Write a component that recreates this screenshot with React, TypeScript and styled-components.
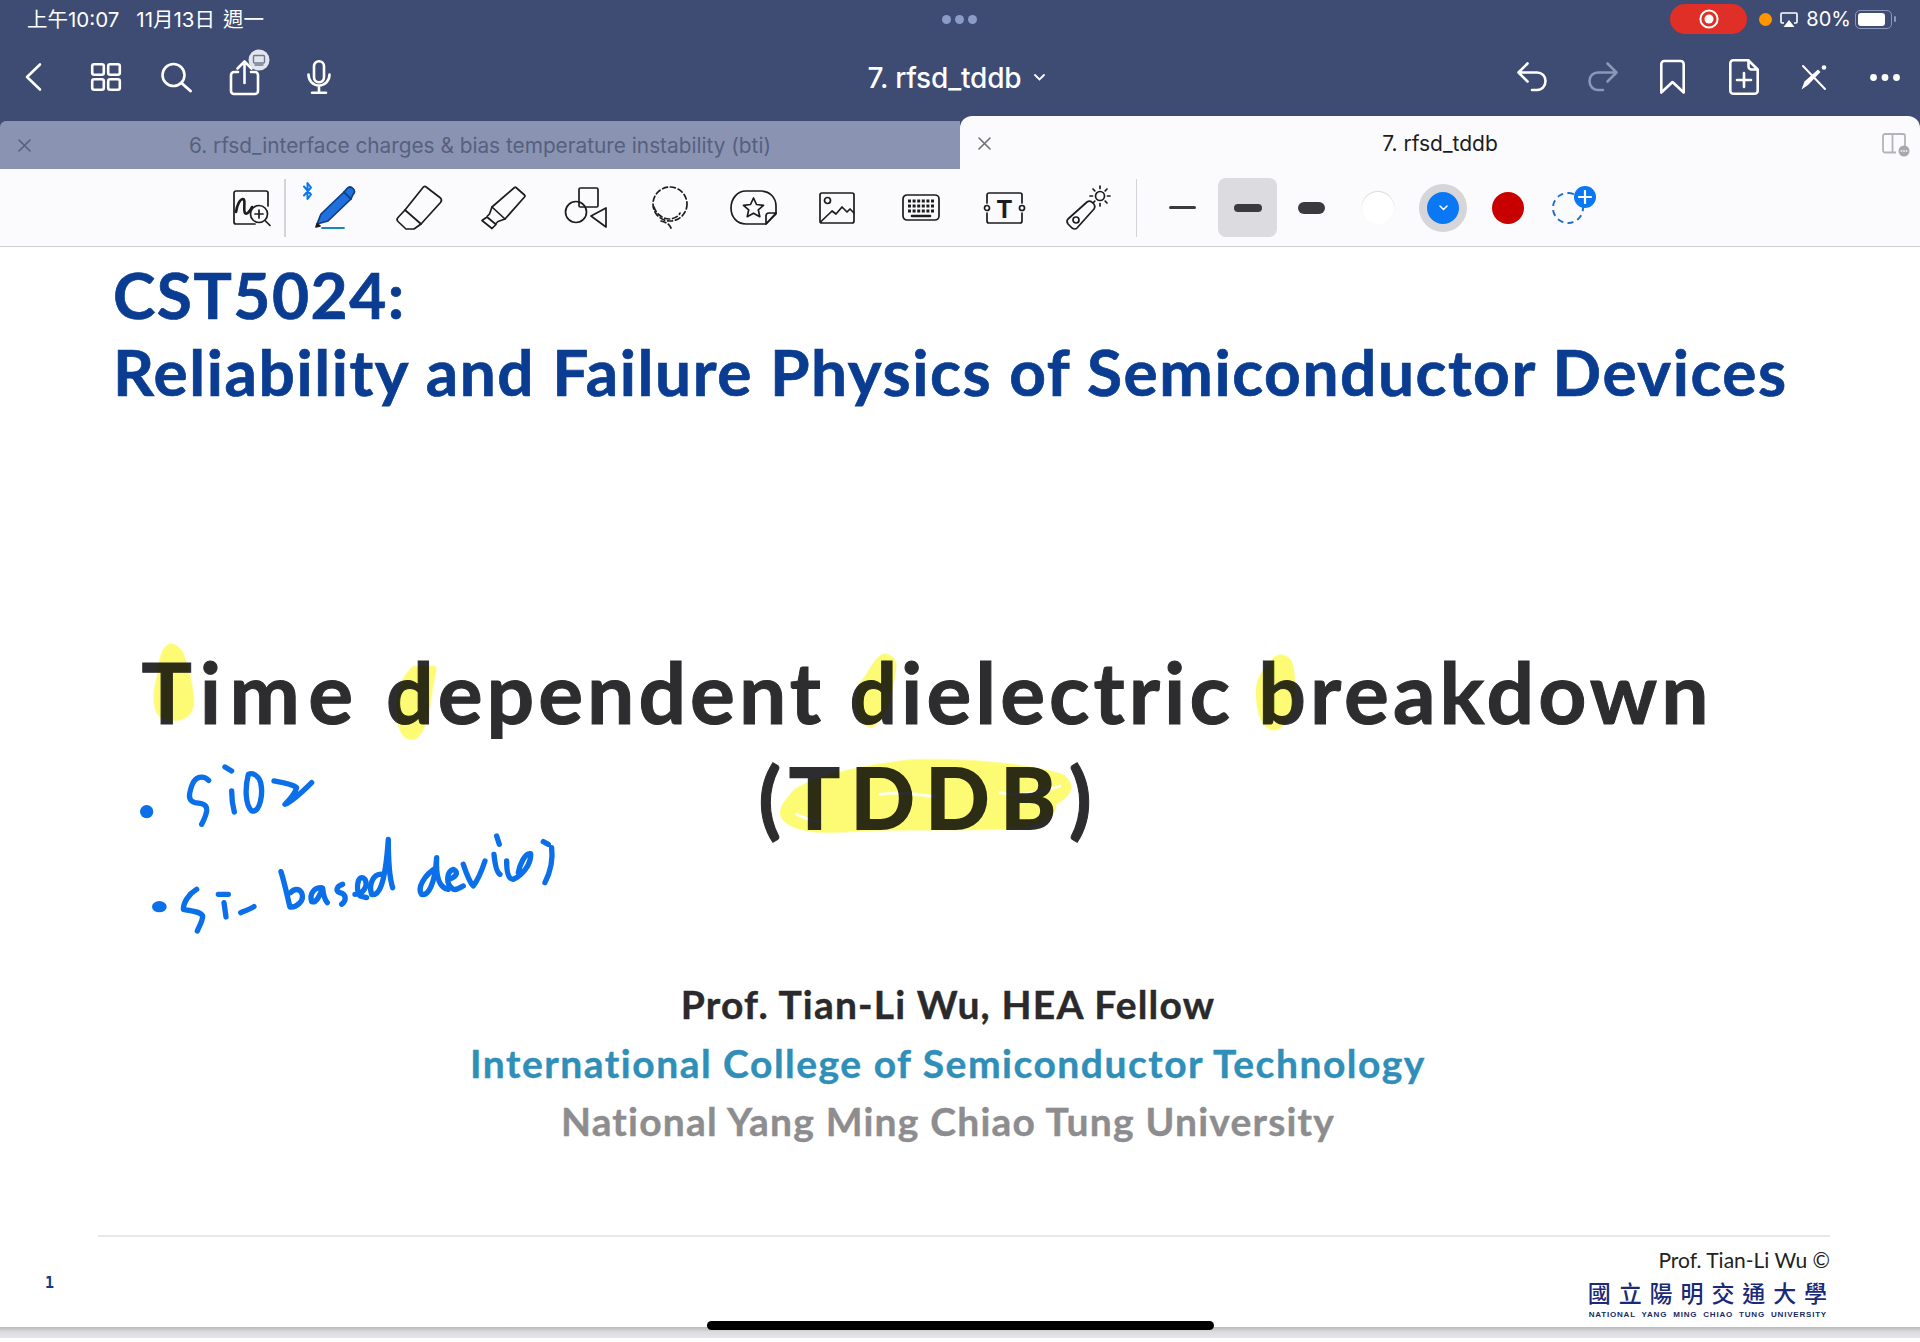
import React from 'react';
import styled, { createGlobalStyle } from 'styled-components';

const GlobalStyle = createGlobalStyle`
  html, body {
    margin: 0;
    padding: 0;
    background: #ffffff;
    overflow: hidden;
  }
`;

const Page = styled.div`
  position: relative;
  width: 1920px;
  height: 1342px;
  overflow: hidden;
  font-family: Inter, 'Noto Sans CJK TC', sans-serif;
`;

const Header = styled.header`
  background: #3e4c74;
  color: #ffffff;
`;

const StatusBar = styled.div`
  display: grid;
  grid-template-columns: 1fr auto 1fr;
  align-items: center;
  box-sizing: border-box;
  height: 38px;
  padding: 0 28px 0 27px;
  font-size: 20.5px;
`;

const StatusLeft = styled.div`
  display: flex;
  gap: 8px;
  margin-top: -3px;
  white-space: nowrap;
`;

const StatusTime = styled.span`
  margin-right: 9px;
`;

const Grabber = styled.div`
  display: flex;
  gap: 4px;
`;

const GrabberDot = styled.span`
  width: 9px;
  height: 9px;
  border-radius: 50%;
  background: #8b9bc8;
`;

const StatusRight = styled.div`
  display: flex;
  align-items: center;
  justify-content: flex-end;
`;

const RecordPill = styled.div`
  display: flex;
  align-items: center;
  justify-content: center;
  width: 77px;
  height: 30px;
  border-radius: 15px;
  background: #df2f26;
`;

const OrangeDot = styled.span`
  width: 13px;
  height: 13px;
  margin-left: 12px;
  border-radius: 50%;
  background: #ff9500;
`;

const AirplayIcon = styled.svg`
  margin-left: 8px;
`;

const BatteryText = styled.span`
  margin: 0 4px 0 8px;
  font-size: 20px;
`;

const Battery = styled.div`
  box-sizing: border-box;
  position: relative;
  width: 37px;
  height: 19px;
  padding: 2px;
  border: 1.5px solid #8b97b8;
  border-radius: 5px;

  &::before {
    content: '';
    display: block;
    width: 27px;
    height: 100%;
    border-radius: 3px;
    background: #ffffff;
  }

  &::after {
    content: '';
    position: absolute;
    right: -5px;
    top: 5px;
    width: 2px;
    height: 6px;
    border-radius: 1px;
    background: #8b97b8;
  }
`;

const NavBar = styled.nav`
  display: grid;
  grid-template-columns: 1fr auto 1fr;
  align-items: center;
  height: 78px;
`;

const NavGroup = styled.div<{ $right?: boolean }>`
  display: flex;
  align-items: center;
  justify-content: ${(p) => (p.$right ? 'flex-end' : 'flex-start')};
  padding: ${(p) => (p.$right ? '0 20px 0 0' : '0 0 0 25px')};
`;

const NavIcon = styled.svg<{ $gap?: number; $dim?: boolean }>`
  display: block;
  flex: none;
  margin-left: ${(p) => p.$gap ?? 0}px;
  fill: none;
  stroke: ${(p) => (p.$dim ? '#8b97b8' : '#ffffff')};
  stroke-width: 2.6;
  stroke-linecap: round;
  stroke-linejoin: round;
  overflow: visible;
`;

const DocTitle = styled.div`
  display: flex;
  align-items: center;
  gap: 13px;
  padding: 1px 7px 0 0;
  font-size: 28px;
  font-weight: 500;
  letter-spacing: -0.2px;
  white-space: nowrap;
`;

const TabStrip = styled.div`
  display: flex;
  align-items: flex-end;
  height: 53px;
`;

const Tab = styled.div<{ $active?: boolean }>`
  display: grid;
  grid-template-columns: 48px 1fr 48px;
  align-items: center;
  justify-items: center;
  box-sizing: border-box;
  width: 960px;
  height: ${(p) => (p.$active ? 53 : 48)}px;
  padding-top: ${(p) => (p.$active ? 2 : 0)}px;
  border-radius: ${(p) => (p.$active ? '12px 12px 0 0' : '6px 0 0 0')};
  background: ${(p) => (p.$active ? '#fbfafc' : '#8a94b2')};
  color: ${(p) => (p.$active ? '#1c1c1e' : '#56607f')};
  font-size: ${(p) => (p.$active ? 21 : 20.8)}px;
  white-space: nowrap;
`;

const CloseIcon = styled.svg<{ $active?: boolean }>`
  stroke: ${(p) => (p.$active ? '#6e6e73' : '#56607f')};
  stroke-width: 1.6;
  stroke-linecap: round;
`;

const PanelIcon = styled.svg`
  fill: none;
  stroke: #b4b4b8;
  stroke-width: 1.8;
  margin-left: -4px;
  overflow: visible;
`;

const Toolbar = styled.div`
  display: flex;
  align-items: center;
  box-sizing: border-box;
  height: 78px;
  padding-left: 233px;
  border-bottom: 1.5px solid #cfcfd2;
  background: #fbfafc;
`;

const ToolIcon = styled.svg<{ $gap?: number }>`
  display: block;
  flex: none;
  margin-left: ${(p) => p.$gap ?? 0}px;
  fill: none;
  stroke: #1c1c1e;
  stroke-width: 1.7;
  stroke-linecap: round;
  stroke-linejoin: round;
  overflow: visible;
`;

const BluetoothIcon = styled(ToolIcon)`
  align-self: flex-start;
  margin-top: 13px;
  stroke: #0a78e8;
  stroke-width: 2;
`;

const ToolDivider = styled.span<{ $gap: number }>`
  flex: none;
  width: 1.5px;
  height: 58px;
  margin-left: ${(p) => p.$gap}px;
  background: #d4d4d8;
`;

const LineWidth = styled.span<{ $gap: number; $h: number; $w?: number }>`
  flex: none;
  width: ${(p) => p.$w ?? 27}px;
  height: ${(p) => p.$h}px;
  margin-left: ${(p) => p.$gap}px;
  border-radius: ${(p) => p.$h / 2}px;
  background: #3b3b3f;
`;

const LineWidthBox = styled.div`
  display: flex;
  align-items: center;
  justify-content: center;
  flex: none;
  width: 59px;
  height: 59px;
  margin-left: 22px;
  border-radius: 8px;
  background: #dcdbe0;
`;

const Swatch = styled.span<{ $gap: number; $color: string; $ring?: boolean }>`
  display: flex;
  align-items: center;
  justify-content: center;
  flex: none;
  box-sizing: content-box;
  width: 32px;
  height: 32px;
  margin-left: ${(p) => p.$gap}px;
  border-radius: 50%;
  background: ${(p) => p.$color};
  border: ${(p) => (p.$ring ? '8px solid #d6d6da' : 'none')};
`;

const WhiteSwatch = styled(Swatch)`
  box-shadow: 0 -1px 1px #dadada;
`;

const AddColor = styled.div`
  position: relative;
  flex: none;
  box-sizing: border-box;
  width: 32px;
  height: 32px;
  margin-left: 28px;
  border: 2px dashed #1f6fc8;
  border-radius: 50%;
`;

const AddBubble = styled.span`
  position: absolute;
  right: -14px;
  top: -8px;
  display: flex;
  align-items: center;
  justify-content: center;
  width: 22px;
  height: 22px;
  border-radius: 50%;
  background: #0a78f5;
`;

const Slide = styled.main`
  position: relative;
  box-sizing: border-box;
  height: 1080px;
  background: #ffffff;
  font-family: Lato, sans-serif;
  font-weight: 700;
`;

const CourseBlock = styled.div`
  padding: 10px 0 0 113px;
  color: #0a3d91;
  font-size: 64px;
  line-height: 75px;
  white-space: nowrap;
  -webkit-text-stroke: 0.7px #0a3d91;
`;

const CourseLine = styled.div<{ $spacing: number }>`
  letter-spacing: ${(p) => p.$spacing}px;

  & + & {
    margin-top: 2px;
  }
`;

const Heading = styled.h1`
  width: 1854px;
  margin: 230px 0 0;
  color: #2d2c2e;
  font-size: 84px;
  font-weight: 700;
  line-height: 105px;
  letter-spacing: 4px;
  text-align: center;
  white-space: nowrap;
  -webkit-text-stroke: 1px #2d2c2e;
`;

const WideWord = styled.span`
  letter-spacing: 8.4px;
`;

const Acronym = styled.span`
  padding: 0 2px 0 4px;
  letter-spacing: 11px;
  -webkit-text-stroke: 2px #2d2c2e;
`;

const Credits = styled.div`
  width: 1896px;
  margin-top: 126px;
  font-size: 39px;
  line-height: 58.5px;
  text-align: center;
  white-space: nowrap;
  -webkit-text-stroke: 0.4px currentColor;
`;

const CreditLine = styled.div<{ $color: string; $spacing: number }>`
  color: ${(p) => p.$color};
  letter-spacing: ${(p) => p.$spacing}px;
`;

const Footer = styled.footer`
  position: absolute;
  left: 98px;
  right: 90px;
  bottom: 0;
  height: 90px;
  border-top: 2px solid #e9e9eb;
`;

const PageNumber = styled.span`
  position: absolute;
  left: -53px;
  top: 37px;
  color: #123a80;
  font-family: 'DejaVu Sans Mono', monospace;
  font-size: 15px;
  font-weight: 700;
`;

const FooterBrand = styled.div`
  display: flex;
  flex-direction: column;
  align-items: flex-end;
  padding-top: 11px;
`;

const Copyright = styled.div`
  color: #222222;
  font-size: 21px;
  font-weight: 400;
  line-height: 24px;
`;

const SchoolName = styled.div`
  margin: 6px -8px 0 0;
  padding-right: 3px;
  color: #1a2a78;
  font-family: 'Noto Sans CJK TC', sans-serif;
  font-size: 23px;
  font-weight: 500;
  line-height: 28px;
  letter-spacing: 7.9px;
`;

const SchoolNameEn = styled.div`
  margin-top: 4px;
  padding-right: 3px;
  color: #1a2a60;
  font-family: 'Liberation Sans', sans-serif;
  font-size: 8px;
  font-weight: 700;
  line-height: 10px;
  letter-spacing: 0.8px;
  word-spacing: 3px;
`;

const InkLayer = styled.svg`
  position: absolute;
  left: 0;
  top: 0;
  pointer-events: none;
`;

const Highlights = styled.g`
  mix-blend-mode: multiply;
  fill: #fdfb74;
`;

const InkStrokes = styled.g`
  fill: none;
  stroke: #0a6fe8;
  stroke-width: 16;
  stroke-linecap: round;
  stroke-linejoin: round;
`;

const ShadowStrip = styled.div`
  height: 11px;
  background: linear-gradient(#b9b9bc, #dcdbdf 45%, #e6e5e9);
`;

const HomeBar = styled.div`
  position: absolute;
  left: 707px;
  top: 1321px;
  width: 507px;
  height: 9px;
  border-radius: 5px;
  background: #000000;
`;

const Close = ({ active }: { active?: boolean }) => (
  <CloseIcon $active={active} width="13" height="13" viewBox="0 0 13 13">
    <path d="M1 1l11 11M12 1L1 12" />
  </CloseIcon>
);

const App = () => {
  return (
    <Page>
      <GlobalStyle />
      <Header>
        <StatusBar>
          <StatusLeft>
            <StatusTime>上午10:07</StatusTime>
            <span>11月13日</span>
            <span>週一</span>
          </StatusLeft>
          <Grabber>
            <GrabberDot />
            <GrabberDot />
            <GrabberDot />
          </Grabber>
          <StatusRight>
            <RecordPill>
              <svg width="20" height="20" viewBox="0 0 20 20">
                <circle cx="10" cy="10" r="8.6" fill="none" stroke="#fff" strokeWidth="2" />
                <circle cx="10" cy="10" r="4.5" fill="#fff" />
              </svg>
            </RecordPill>
            <OrangeDot />
            <AirplayIcon width="18" height="15" viewBox="0 0 18 15">
              <path d="M4 11H2a1 1 0 0 1-1-1V2a1 1 0 0 1 1-1h14a1 1 0 0 1 1 1v8a1 1 0 0 1-1 1h-2" fill="none" stroke="#fff" strokeWidth="1.6" />
              <path d="M9 8l5.5 7h-11z" fill="#fff" />
            </AirplayIcon>
            <BatteryText>80%</BatteryText>
            <Battery />
          </StatusRight>
        </StatusBar>

        <NavBar>
          <NavGroup>
            <NavIcon width="17" height="28" viewBox="0 0 17 28">
              <path d="M15 1.5L2 14l13 12.5" />
            </NavIcon>
            <NavIcon $gap={49} width="30" height="28" viewBox="0 0 30 28">
              <rect x="1.2" y="1.2" width="11.6" height="10.6" rx="2" />
              <rect x="17.2" y="1.2" width="11.6" height="10.6" rx="2" />
              <rect x="1.2" y="16.2" width="11.6" height="10.6" rx="2" />
              <rect x="17.2" y="16.2" width="11.6" height="10.6" rx="2" />
            </NavIcon>
            <NavIcon $gap={40} width="31" height="29" viewBox="0 0 31 29">
              <circle cx="12.5" cy="12" r="11" />
              <path d="M20.5 20l9 8" strokeWidth="3" />
            </NavIcon>
            <NavIcon $gap={38} width="30" height="36" viewBox="0 0 30 36">
              <path d="M8 13H4a3 3 0 0 0-3 3v16a3 3 0 0 0 3 3h21a3 3 0 0 0 3-3V16a3 3 0 0 0-3-3h-4" />
              <path d="M14.5 24V3M7.5 9.5l7-7 7 7" />
              <circle cx="29" cy="1" r="10.5" fill="#e3e5ec" stroke="none" />
              <rect x="23.5" y="-3.5" width="11" height="7.5" rx="1" fill="none" stroke="#6d7892" strokeWidth="1.4" />
              <path d="M25 6h8" stroke="#6d7892" strokeWidth="1.4" />
            </NavIcon>
            <NavIcon $gap={47} width="24" height="34" viewBox="0 0 24 34">
              <rect x="7" y="1.2" width="10" height="21" rx="5" />
              <path d="M1.5 14.5c0 6.500 4.500 11 10.500 11s10.500-4.500 10.500-11M12 25.500v6M5 32.800h14" />
            </NavIcon>
          </NavGroup>

          <DocTitle>
            7. rfsd_tddb
            <svg width="11" height="7" viewBox="0 0 11 7" fill="none" stroke="#fff" strokeWidth="1.8" strokeLinecap="round">
              <path d="M1 1l4.500 4.500L10 1" />
            </svg>
          </DocTitle>

          <NavGroup $right>
            <NavIcon width="30" height="30" viewBox="0 0 30 30">
              <path d="M10.500 1.500L1.500 10.500l9 9M1.500 10.500H20c5 0 8.500 3.500 8.500 8.500s-3.500 9-8.500 9h-5" />
            </NavIcon>
            <NavIcon $dim $gap={40} width="31" height="30" viewBox="0 0 31 30">
              <path d="M20.500 1.500l9 9-9 9M29.500 10.500H11c-5 0-8.500 3.500-8.500 8.500s3.500 9 8.500 9h5" />
            </NavIcon>
            <NavIcon $gap={42} width="25" height="34" viewBox="0 0 25 34">
              <path d="M1.300 4a3 3 0 0 1 3-3h16.400a3 3 0 0 1 3 3v28.500L12.500 22 1.300 32.500z" />
            </NavIcon>
            <NavIcon $gap={44} width="30" height="36" viewBox="0 0 30 36">
              <path d="M19.500 1.300H4.300a3 3 0 0 0-3 3v27.400a3 3 0 0 0 3 3h21.400a3 3 0 0 0 3-3V10.500zM19.500 1.300v6.200a3 3 0 0 0 3 3h6.200" />
              <path d="M15 14v14M8 21h14" />
            </NavIcon>
            <NavIcon $gap={41} width="27" height="25" viewBox="0 0 27 25">
              <path d="M3 1l22 23" strokeWidth="2" />
              <path d="M1.500 24.500l3-8L18 4.500 20.500 7 8 20z" fill="#fff" stroke="none" />
              <circle cx="24" cy="2.500" r="2.300" fill="#fff" stroke="none" />
            </NavIcon>
            <NavIcon $gap={43} width="30" height="7" viewBox="0 0 30 7">
              <circle cx="3.500" cy="3.500" r="3.400" fill="#fff" stroke="none" />
              <circle cx="15" cy="3.500" r="3.400" fill="#fff" stroke="none" />
              <circle cx="26.500" cy="3.500" r="3.400" fill="#fff" stroke="none" />
            </NavIcon>
          </NavGroup>
        </NavBar>

        <TabStrip>
          <Tab>
            <Close />
            <span>6. rfsd_interface charges &amp; bias temperature instability (bti)</span>
            <span />
          </Tab>
          <Tab $active>
            <Close active />
            <span>7. rfsd_tddb</span>
            <PanelIcon width="25" height="22" viewBox="0 0 25 22">
              <path d="M14 19.500H3a2 2 0 0 1-2-2V3a2 2 0 0 1 2-2h18a2 2 0 0 1 2 2v11M10.500 1v18.500" />
              <circle cx="22" cy="18" r="5.500" fill="#a9a9ad" stroke="none" />
              <circle cx="19.500" cy="18" r="0.900" fill="#eee" stroke="none" />
              <circle cx="22" cy="18" r="0.900" fill="#eee" stroke="none" />
              <circle cx="24.500" cy="18" r="0.900" fill="#eee" stroke="none" />
            </PanelIcon>
          </Tab>
        </TabStrip>
      </Header>

      <Toolbar>
        <ToolIcon width="38" height="36" viewBox="0 0 38 36">
          <path d="M22 34H3a2 2 0 0 1-2-2V3a2 2 0 0 1 2-2h30a2 2 0 0 1 2 2v13" />
          <path d="M3 22c1-7 4-13 7-13 3 0 0 11 2 14 2 2 5-2 7-6" strokeWidth="2.600" />
          <circle cx="26" cy="24" r="8.500" />
          <path d="M22 24h8M26 20v8M32 30.500l5 5" />
        </ToolIcon>
        <ToolDivider $gap={13} />
        <BluetoothIcon $gap={17} width="9" height="18" viewBox="0 0 9 18">
          <path d="M1 4.500l7 8L4.500 17V1L8 5.500l-7 8" />
        </BluetoothIcon>
        <ToolIcon $gap={4} width="41" height="43" viewBox="0 0 41 43">
          <path d="M1 38l4-10L28 6l7 7-23 22z" fill="#1f6fdc" stroke="#123d80" />
          <path d="M28 6l3-3.500c2-2 4-2 6 0s2 4 0 6l-2 4.500z" fill="#1f6fdc" stroke="#123d80" />
          <path d="M1 38l-1 3 4-1z" fill="#1c1c1e" />
          <path d="M6 42h22" stroke="#1d86b8" strokeWidth="1.800" />
        </ToolIcon>
        <ToolIcon $gap={39} width="47" height="45" viewBox="0 0 47 45">
          <path d="M29.500 1.500L44.500 13q2 2 0 4.500L25 39 9 25 27 2.500q1-1.500 2.500-1z" />
          <path d="M9 25l-7 7.500q-2 2 0 4L10 44h8l7-5" />
        </ToolIcon>
        <ToolIcon $gap={38} width="45" height="43" viewBox="0 0 45 43">
          <path d="M35 1.500l8.500 7.500q1 1 0 2L24 33l-13-12L33.500 1.500q.7-.7 1.500 0z" />
          <path d="M11 21l-2.500 7L6 30.500M24 33l-7 2.500-2.500 2.500M6 31l9 7.500-4 4-10-8z" />
        </ToolIcon>
        <ToolIcon $gap={39} width="41" height="41" viewBox="0 0 41 41">
          <rect x="14" y="1" width="19" height="19" rx="1.500" />
          <circle cx="11" cy="25" r="10.500" />
          <path d="M26 29l15-8v19z" />
        </ToolIcon>
        <ToolIcon $gap={45} width="37" height="42" viewBox="0 0 37 42" strokeDasharray="5 3">
          <circle cx="19" cy="17" r="17" />
          <path d="M3 20c2 7 9 12 15 12 5 0 10-3 11-6M10 34c5 1 8 3 10 7" />
        </ToolIcon>
        <ToolIcon $gap={42} width="47" height="35" viewBox="0 0 47 35">
          <path d="M36 34H16C7 34 1 27 1 18S7 1 16 1h15c9 0 15 7 15 15v8z" />
          <path d="M46 23h-7a3 3 0 0 0-3 3v8zM23.500 8l3 6.500 7 .8-5.200 4.600 1.500 6.800-6.300-3.500-6.300 3.500 1.500-6.800-5.200-4.600 7-.8z" />
        </ToolIcon>
        <ToolIcon $gap={42} width="36" height="32" viewBox="0 0 36 32">
          <rect x="1" y="1" width="34" height="30" rx="2" />
          <circle cx="8.500" cy="8.500" r="3" />
          <path d="M1.500 30L13 19l4 3 6-7 5 5 3-3 4 4" />
        </ToolIcon>
        <ToolIcon $gap={47} width="38" height="27" viewBox="0 0 38 27">
          <rect x="1" y="1" width="36" height="25" rx="4" />
          <path d="M6 7h26M6 12h26" strokeWidth="3" strokeDasharray="3 1.600" strokeLinecap="butt" />
          <path d="M6 17h26" strokeWidth="3" strokeDasharray="3 1.600" strokeLinecap="butt" />
          <path d="M10 22h18" strokeWidth="2.600" />
        </ToolIcon>
        <ToolIcon $gap={44} width="41" height="32" viewBox="0 0 41 32">
          <path d="M3 11V3a2 2 0 0 1 2-2h31a2 2 0 0 1 2 2v8M3 21v8a2 2 0 0 0 2 2h31a2 2 0 0 0 2-2v-8" />
          <circle cx="3" cy="16" r="2.500" />
          <circle cx="38" cy="16" r="2.500" />
          <text x="20.500" y="26" textAnchor="middle" fontFamily="Liberation Sans" fontWeight="700" fontSize="25" fill="#1c1c1e" stroke="none">T</text>
        </ToolIcon>
        <ToolIcon $gap={41} width="45" height="44" viewBox="0 0 45 44">
          <path d="M2 33L21 16q3-2 6 1t1 6L11 42q-2 2-5 0l-4-4q-2-3 0-5z" />
          <circle cx="10" cy="34" r="3" />
          <circle cx="34" cy="10" r="4.500" />
          <path d="M34 0v2.500M34 17.500V20M24 10h2.500M41.500 10H44M27 3l1.800 1.800M39.200 15.200L41 17M27 17l1.800-1.800M39.200 4.800L41 3" />
        </ToolIcon>
        <ToolDivider $gap={25} />
        <LineWidth $gap={32} $h={3} />
        <LineWidthBox>
          <LineWidth $gap={0} $h={8} $w={28} />
        </LineWidthBox>
        <LineWidth $gap={21} $h={12} />
        <WhiteSwatch $gap={37} $color="#ffffff" />
        <Swatch $gap={25} $color="#0a78f5" $ring>
          <svg width="9" height="6" viewBox="0 0 9 6" fill="none" stroke="#fff" strokeWidth="1.500" strokeLinecap="round">
            <path d="M1 1l3.500 3.500L8 1" />
          </svg>
        </Swatch>
        <Swatch $gap={25} $color="#c80000" />
        <AddColor>
          <AddBubble>
            <svg width="14" height="14" viewBox="0 0 14 14" stroke="#fff" strokeWidth="2.200" strokeLinecap="round">
              <path d="M7 1v12M1 7h12" />
            </svg>
          </AddBubble>
        </AddColor>
      </Toolbar>

      <Slide>
        <CourseBlock>
          <CourseLine $spacing={1.5}>CST5024:</CourseLine>
          <CourseLine $spacing={1.55}>Reliability and Failure Physics of Semiconductor Devices</CourseLine>
        </CourseBlock>

        <Heading>
          <WideWord>Time</WideWord> dependent dielectric breakdown
          <br />
          (<Acronym>TDDB</Acronym>)
        </Heading>

        <Credits>
          <CreditLine $color="#2a2a2c" $spacing={1.2}>Prof. Tian-Li Wu, HEA Fellow</CreditLine>
          <CreditLine $color="#2f8fb8" $spacing={1.5}>International College of Semiconductor Technology</CreditLine>
          <CreditLine $color="#8d8d90" $spacing={1.2}>National Yang Ming Chiao Tung University</CreditLine>
        </Credits>

        <Footer>
          <PageNumber>1</PageNumber>
          <FooterBrand>
            <Copyright>Prof. Tian-Li Wu ©</Copyright>
            <SchoolName>國立陽明交通大學</SchoolName>
            <SchoolNameEn>NATIONAL YANG MING CHIAO TUNG UNIVERSITY</SchoolNameEn>
          </FooterBrand>
        </Footer>

        <InkLayer width="1920" height="1080" viewBox="0 246 1920 1080">
          <Highlights>
            <g transform="translate(120 630) scale(0.3333)">
              <path d="M145 40C120 50 115 100 110 140C95 190 95 250 130 265C170 275 215 270 222 220C225 170 200 90 190 65C175 40 155 35 145 40Z" />
              <path d="M880 105C850 130 830 170 830 230C830 280 840 325 875 327C905 325 925 280 935 200C945 130 955 110 945 105Z" />
            </g>
            <g transform="translate(740 630) scale(0.3333)">
              <path d="M430 68C400 80 385 130 355 160C340 220 350 285 395 290C430 280 460 200 470 100C465 75 445 65 430 68Z" />
              <path d="M150 490C170 450 350 400 520 385C700 380 880 400 970 430C1010 460 1000 490 950 520C950 560 900 590 800 595C600 600 400 595 300 605C200 610 130 590 120 550C120 520 135 510 150 490Z" />
              <path d="M420 490C470 482 530 488 590 498M170 550C190 560 215 568 240 572M780 485C830 495 880 490 960 465" fill="none" stroke="#fff" strokeWidth="8" strokeLinecap="round" />
            </g>
            <g transform="translate(1230 640) scale(0.3333)">
              <path d="M125 55C140 35 170 35 185 60C200 95 195 160 190 200C175 245 155 270 125 268C90 255 78 210 78 150C78 115 95 85 115 75Z" />
            </g>
          </Highlights>
          <InkStrokes transform="translate(120 630) scale(0.3333)">
            <circle cx="80" cy="542" r="20" fill="#0a6fe8" stroke="none" />
            <path d="M266 448C250 432 225 435 215 465C205 495 205 510 225 515C250 518 262 520 260 540C258 555 250 570 245 580" />
            <path d="M315 408L335 420M335 480C335 500 338 525 343 543" />
            <path d="M385 430C375 470 375 520 395 540C420 545 430 490 422 455C415 430 395 425 385 430Z" />
            <path d="M462 450C490 455 520 460 530 470C525 490 505 510 495 520C520 510 550 480 575 455" />
            <ellipse cx="118" cy="827" rx="22" ry="17" fill="#0a6fe8" stroke="none" />
            <path d="M230 775C205 790 190 815 190 835C210 840 240 840 248 855C248 870 238 885 232 900" />
            <path d="M295 790L325 790M312 815L318 858M362 845C375 840 390 835 402 827" />
            <path d="M483 722C495 760 505 810 510 828C530 830 555 810 545 785C535 770 520 775 512 785" />
            <path d="M605 770C580 770 568 790 575 812C590 818 600 790 608 772C610 790 612 805 622 815" />
            <path d="M668 760C650 765 645 780 660 785C680 790 680 810 665 820" />
            <path d="M705 790C730 790 745 765 735 745C715 725 705 770 720 795L740 800" />
            <path d="M790 730C760 725 745 760 755 790C775 795 795 770 805 625C805 680 808 740 818 770" />
            <path d="M950 710C915 730 890 770 905 790C925 795 945 760 950 680C948 720 950 770 985 775" />
            <path d="M985 745C1005 740 1020 725 1000 715C980 720 975 760 1000 775C1010 778 1020 770 1030 765" />
            <path d="M1030 700C1040 730 1050 755 1060 765C1075 745 1085 720 1095 690" />
            <path d="M1130 615L1138 640M1122 670C1125 700 1130 725 1140 730" />
            <path d="M1160 690C1160 720 1165 745 1180 745C1205 735 1235 700 1232 668C1215 665 1200 700 1195 725" />
            <path d="M1270 632L1285 640M1295 650C1300 690 1290 725 1275 755" />
          </InkStrokes>
        </InkLayer>
      </Slide>

      <ShadowStrip />
      <HomeBar />
    </Page>
  );
};

export default App;
